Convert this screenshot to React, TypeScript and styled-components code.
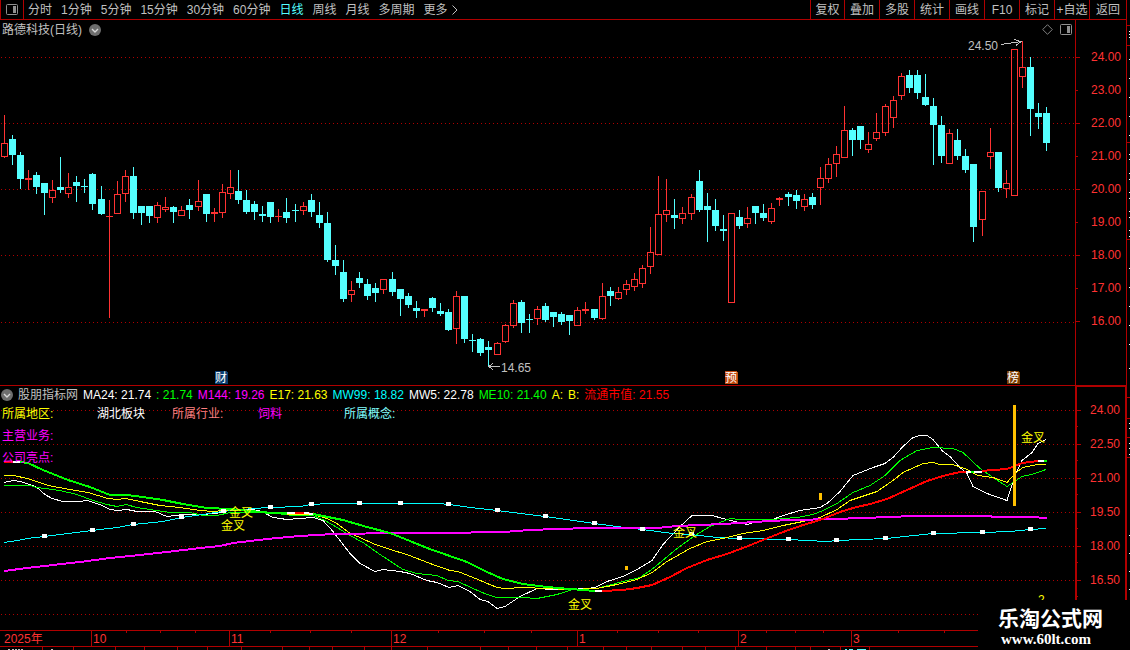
import React from 'react';
import styled, { createGlobalStyle, css } from 'styled-components';

const c = {
  line: '#b00000',
  red: '#ff3232',
  cyan: '#54ffff',
  grey: '#c0c0c0',
};
const fontStack = '"Liberation Sans", "Noto Sans CJK SC", sans-serif';

const Global = createGlobalStyle`
  * { box-sizing: border-box; }
  body {
    margin: 0;
    background: #000;
    color: ${c.grey};
    font: 12px/16px ${fontStack};
    overflow: hidden;
  }
  button { font: inherit; color: inherit; background: none; border: 0; padding: 0; cursor: pointer; }
  button svg { display: block; }
`;

const Page = styled.div`
  position: relative;
  background: #000;
`;
const Upper = styled.div`
  display: grid;
  grid-template-columns: minmax(0, 1fr) 3px;
`;
const Main = styled.main`
  min-width: 0;
`;
const Toolbar = styled.header`
  display: flex;
  height: 20px;
  border-bottom: 1px solid ${c.line};
  border-right: 1px solid ${c.line};
`;
const LayoutButton = styled.button`
  display: flex;
  align-items: center;
  justify-content: center;
  width: 24px;
  border-left: 1px solid ${c.line};
  border-right: 1px solid ${c.line};
`;
const Periods = styled.nav`
  display: flex;
  align-items: center;
  gap: 9px;
  flex: 1;
  padding-left: 4px;
  white-space: nowrap;
`;
const Period = styled.button<{ $active?: boolean }>`
  display: flex;
  align-items: center;
  gap: 4px;
  color: ${(p) => (p.$active ? c.cyan : c.grey)};
`;
const Tools = styled.div`
  display: grid;
  grid-template-columns: 34px repeat(7, 35px) 37px;
`;
const Tool = styled.button`
  border-left: 1px solid ${c.line};
  white-space: nowrap;
`;
const ChartRow = styled.section`
  display: grid;
  grid-template-columns: minmax(0, 1fr) 52px;
`;
const Plot = styled.div<{ $divided?: boolean }>`
  position: relative;
  border-bottom: ${(p) => (p.$divided ? `1px solid ${c.line}` : '0')};
`;
const Canvas = styled.svg<{ $h: number }>`
  display: block;
  width: 100%;
  height: ${(p) => p.$h}px;
  font: 12px ${fontStack};
`;
const Overlay = styled.div`
  position: absolute;
  top: 0;
  left: 0;
  right: 0;
`;
const TitleBar = styled.div`
  display: flex;
  align-items: center;
  justify-content: space-between;
  height: 19px;
  padding: 0 3px 0 2px;
`;
const Group = styled.div`
  display: flex;
  align-items: center;
  gap: 7px;
`;
const Axis = styled.ol<{ $heavy?: boolean }>`
  list-style: none;
  margin: 0;
  padding: ${(p) => (p.$heavy ? '6px 0 0 0' : '21px 0 0 0')};
  color: ${c.red};
  text-align: right;
  border: ${(p) => (p.$heavy ? 2 : 1)}px solid ${c.line};
  border-top: ${(p) => (p.$heavy ? `1px solid ${c.line}` : '0')};
  border-bottom: ${(p) => (p.$heavy ? '0' : `1px solid ${c.line}`)};
`;
const AxisLabel = styled.li<{ $row: number; $minor?: boolean; $half?: boolean }>`
  position: relative;
  height: ${(p) => p.$row}px;
  line-height: ${(p) => p.$row}px;
  padding-right: 5px;
  &::before {
    content: '';
    position: absolute;
    left: 0;
    top: ${(p) => Math.floor(p.$row / 2)}px;
    width: ${(p) => (p.$minor ? 2 : 4)}px;
    height: 1px;
    background: ${c.line};
  }
  ${(p) =>
    p.$half &&
    css`
      &::after {
        content: '';
        position: absolute;
        left: 0;
        bottom: 0;
        width: 1px;
        height: 1px;
        background: ${c.line};
      }
    `}
`;
const Legend = styled.div`
  display: flex;
  align-items: center;
  gap: 5px;
  height: 17px;
  padding-left: 1px;
  white-space: nowrap;
`;
const Tint = styled.span<{ $color: string }>`
  color: ${(p) => p.$color};
`;
const Facts = styled.div`
  display: grid;
  grid-template-columns: 95px 75px 86px 86px auto;
  height: 22px;
  align-items: center;
  padding-left: 2px;
  justify-content: start;
  white-space: nowrap;
`;
const TimeAxis = styled.footer`
  display: grid;
  grid-template-columns: 91fr 138fr 162fr 186fr 161fr 113fr 279fr;
  height: 17px;
  border-top: 1px solid ${c.line};
  border-bottom: 1px solid ${c.line};
  color: ${c.red};
`;
const Month = styled.div<{ $first?: boolean }>`
  position: relative;
  border-left: ${(p) => (p.$first ? '0' : `1px solid ${c.line}`)};
  padding-left: ${(p) => (p.$first ? 4 : 1)}px;
`;
const Ticks = styled.div`
  position: absolute;
  inset: 0 0 auto 0;
  display: flex;
  justify-content: space-evenly;
`;
const Tick = styled.i`
  width: 1px;
  height: 2px;
  background: ${c.line};
`;
const Watermark = styled.a`
  position: absolute;
  right: 0;
  bottom: 0;
  width: 152px;
  height: 50px;
  padding: 2px 0 0 20px;
  background: #000;
  color: #fff;
  text-decoration: none;
`;
const SiteName = styled.span`
  display: block;
  font: bold 21px/30px "Noto Sans CJK SC", sans-serif;
`;
const SiteUrl = styled.span`
  display: block;
  padding-left: 3px;
  font: bold 15px/14px "Liberation Serif", serif;
`;

/* [falling, high, body top, body bottom, low] */
type Bar = [number, number, number, number, number];
const bars: Bar[] = [
  [0,115,143,157,158],[1,135,139,155,165],[1,152,155,179,189],[0,170,178,180,190],[1,172,175,187,194],
  [1,183,183,193,215],[0,180,190,198,203],[1,157,187,190,193],[0,173,187,194,198],[1,176,182,186,202],
  [1,179,186,187,193],[1,173,174,204,210],[1,186,199,214,215],[0,200,216,217,318],[0,181,194,214,214],
  [0,170,176,194,202],[1,167,176,213,219],[1,206,206,213,225],[1,206,206,216,223],[0,202,205,218,223],
  [0,197,207,210,212],[1,206,207,212,223],[0,206,210,216,216],[1,199,205,210,219],[0,180,201,207,211],
  [1,194,194,214,222],[0,208,212,214,222],[0,184,192,213,218],[0,170,187,194,199],[1,170,191,200,204],
  [1,190,200,212,214],[1,201,204,212,220],[1,206,214,216,222],[1,202,202,217,223],[0,209,216,217,222],
  [1,198,212,218,223],[1,204,210,211,222],[0,202,206,211,215],[1,194,200,212,217],[1,202,215,223,228],
  [1,212,223,260,262],[1,245,260,266,275],[1,260,272,299,302],[0,281,290,295,302],[1,272,278,283,288],
  [1,279,284,296,300],[1,283,288,293,302],[0,279,279,290,294],[1,272,279,292,296],[1,289,289,299,316],
  [1,293,296,305,308],[1,301,308,311,318],[0,309,309,311,317],[1,297,298,308,312],[1,303,311,314,316],
  [1,309,312,330,331],[0,291,296,329,344],[1,296,296,339,343],[1,334,340,341,352],[1,338,339,353,356],
  [1,341,347,350,367],[0,342,343,355,355],[0,324,325,342,343],[0,300,303,326,328],[1,300,302,323,333],
  [1,314,319,320,333],[0,306,309,319,325],[1,303,306,320,322],[1,312,312,317,327],[1,312,314,322,325],
  [1,315,315,321,335],[0,307,310,326,326],[0,302,309,311,314],[1,309,309,318,320],[0,283,296,319,320],
  [1,287,291,296,306],[0,287,292,299,300],[0,280,284,290,295],[0,273,279,287,291],[0,265,268,284,288],
  [0,227,252,267,274],[0,176,214,255,255],[0,179,210,215,222],[1,199,215,218,229],[0,207,213,219,224],
  [0,194,197,214,220],[1,170,181,210,212],[1,193,206,210,242],[1,199,210,226,231],[1,215,229,231,241],
  [0,213,213,303,303],[1,210,217,226,229],[0,207,218,224,228],[1,206,206,213,224],[1,204,213,218,221],
  [0,203,208,222,224],[0,197,198,200,206],[1,192,194,197,206],[1,190,195,201,209],[0,194,199,207,211],
  [1,193,197,205,209],[0,167,178,188,205],[0,158,164,179,183],[0,146,154,164,177],[0,106,130,158,158],
  [1,128,130,140,156],[1,126,126,140,149],[0,132,144,150,153],[0,113,132,139,141],[0,104,106,133,136],
  [0,96,100,118,128],[0,73,76,96,100],[1,70,75,88,93],[1,70,75,93,99],[1,74,97,105,106],
  [1,98,106,125,165],[1,116,125,156,163],[0,129,133,164,164],[1,129,140,156,160],[1,149,156,170,173],
  [1,164,164,227,242],[0,191,191,220,236],[0,128,152,157,169],[1,152,152,188,192],[0,170,183,189,198],
  [0,49,49,196,196],[0,41,67,77,88],[1,57,67,109,136],[1,103,113,117,129],[1,107,113,143,151],
];

/* Bars are 8px apart, with one extra pixel after every dozen. */
const barX = (i: number) => 4 + 8 * i + Math.floor((i < 60 ? i : i - 1) / 12);

function Candle({ i, bar }: { i: number; bar: Bar }) {
  const [falling, high, top, bottom, low] = bar;
  const x = barX(i);
  const color = falling ? c.cyan : c.red;
  const solid = falling || bottom - top < 3;
  return (
    <g fill={color}>
      {top > high && <rect x={x} y={high} width="1" height={top - high} />}
      {low > bottom && <rect x={x} y={bottom} width="1" height={low - bottom} />}
      {solid ? (
        <rect x={x - 3} y={top} width="7" height={bottom - top} />
      ) : (
        <path
          fillRule="evenodd"
          d={`M${x - 3} ${top}h7V${bottom}h-7zM${x - 2} ${top + 1}V${bottom - 1}h5V${top + 1}z`}
        />
      )}
    </g>
  );
}

function GridLines({ ys }: { ys: number[] }) {
  return (
    <>
      {ys.map((y) => (
        <line key={y} x1="1" x2="100%" y1={y + 0.5} y2={y + 0.5} stroke={c.line} strokeDasharray="1 3" />
      ))}
    </>
  );
}

function Badge({ x, fill, children }: { x: number; fill: string; children: string }) {
  return (
    <g>
      <path d={`M${x} 371h11l2 2v11h-13z`} fill={fill} />
      <text x={x} y="382" fill="#fff">{children}</text>
    </g>
  );
}

const ChevronDisc = () => (
  <svg width="12" height="12" viewBox="0 0 12 12" aria-hidden="true">
    <circle cx="6" cy="6" r="6" fill="#6e6e6e" />
    <path d="M3 5l3 3 3-3" fill="none" stroke="#d8d8d8" strokeWidth="1.4" />
  </svg>
);

const PanelIcon = () => (
  <svg width="12" height="11" viewBox="0 0 12 11" aria-hidden="true">
    <rect x=".5" y=".5" width="11" height="10" rx="1" fill="none" stroke="#909090" />
    <rect x="7" y="2" width="3" height="7" fill="#909090" />
  </svg>
);

const curves = {
  magenta:
    '4,571 27,568 53,565 80,562 110,558 140,555 167,552 200,548 220,546 233,543 267,539 300,536 333,534 400,533 440,533 503,532 530,530 557,529 590,528 657,528 677,526 700,525 723,524 740,523 770,521 790,520 837,519 860,518 893,517 910,516 990,516 993,517 1038,517 1040,518 1047,518',
  cyan:
    '4,542 18,540 27,538 44,536 92,530 117,527 133,524 163,521 182,517 203,514 222,511 243,509 253,508 270,507 300,506 311,504 330,503 437,503 450,504 470,507 497,510 545,516 594,523 617,526 642,529 673,533 691,534 717,537 739,538 788,539 807,540 827,541 837,540 886,538 933,533 982,532 1010,531 1030,529 1046,528',
  yellow:
    '4,475 14,475 27,478 37,481 48,485 70,489 88,492 108,498 117,499 126,498 140,501 160,505 180,507 200,510 213,511 233,509 253,510 273,513 300,514 313,514 327,518 337,523 350,533 360,537 375,544 400,552 407,554 430,563 450,570 458,571 473,577 497,587 505,588 523,587 570,589 597,588 617,584 637,579 652,572 667,561 690,548 707,541 723,538 743,533 763,530 783,525 803,521 820,517 837,509 850,500 877,491 893,480 903,472 923,463 933,462 940,464 953,464 967,469 978,475 993,477 1007,482 1015,473 1023,467 1037,464 1046,464',
  green:
    '4,485 30,485 37,487 60,490 77,494 93,500 107,504 117,506 126,504 137,507 150,509 170,512 190,512 203,515 217,515 230,512 253,512 277,513 293,515 313,515 325,520 337,527 350,535 363,542 380,554 403,569 417,573 437,575 448,580 458,581 473,588 487,594 497,597 523,597 537,598 557,594 573,589 597,588 623,581 640,577 653,568 677,548 695,535 710,526 730,518 740,519 770,519 797,517 813,514 823,510 837,503 853,492 870,485 885,475 900,460 917,450 933,447 953,448 963,452 980,468 993,477 1007,486 1022,476 1032,474 1046,469',
  white:
    '4,482 13,480 20,481 30,484 37,487 45,494 52,498 63,501 80,501 87,500 100,504 110,509 117,510 127,509 137,511 155,511 167,516 183,514 200,514 217,513 227,509 253,509 262,511 273,517 287,519 313,517 323,520 333,531 350,553 360,563 375,571 383,569 400,571 410,573 427,580 437,582 449,587 458,585 470,591 480,599 488,601 497,608 505,606 520,596 537,588 553,589 570,589 587,588 595,587 607,581 623,576 637,569 652,560 663,544 680,526 692,515 712,515 723,518 747,524 757,521 770,520 783,515 800,510 820,507 827,503 840,491 853,475 873,467 885,463 893,457 903,446 913,437 920,435 927,435 933,439 942,450 950,456 960,467 967,473 973,486 987,493 1007,500 1015,475 1022,460 1032,452 1038,443 1046,439',
};

/* The 24-period average changes colour with its direction. */
const trend: [string, string][] = [
  ['#ff0000', '4,462 13,462'],
  ['#ffffff', '13,462 20,462'],
  ['#00ff00', '20,462 28,463 43,470 68,480 90,487 110,495 127,495 143,497 163,500 183,504 207,508 230,509 250,511 273,513 287,513'],
  ['#ffffff', '287,513 295,513'],
  ['#ff0000', '295,513 304,513'],
  ['#ffffff', '304,513 313,514'],
  ['#00ff00', '313,514 318,515 343,520 367,527 390,533 410,541 427,548 447,555 467,562 487,572 503,579 523,584 547,587 570,589 583,590 595,591'],
  ['#ffffff', '595,591 602,591'],
  ['#ff0000', '602,591 623,590 637,588 652,585 670,577 687,568 707,560 727,554 743,548 763,540 783,532 803,525 820,520 840,512 853,508 870,504 887,499 907,490 927,481 943,476 960,472 966,472'],
  ['#ffffff', '966,472 971,472'],
  ['#00ff00', '971,472 974,472'],
  ['#ffffff', '974,472 982,472'],
  ['#ff0000', '982,471 993,470 1007,469 1015,466 1022,463 1038,461'],
  ['#ffffff', '1038,461 1044,461'],
  ['#00ff00', '1044,461 1047,461'],
];

const markers = [
  [44, 536], [92, 530], [133, 524], [181, 517], [223, 511], [270, 507], [311, 504], [359, 503], [400, 503],
  [448, 504], [497, 510], [545, 516], [594, 523], [642, 529], [691, 534], [739, 538], [788, 539], [836, 540],
  [885, 538], [933, 533], [982, 532], [1030, 529],
];
const crosses = [[229, 517], [221, 530], [568, 609], [673, 537], [1021, 442]];

const periods = ['分时', '1分钟', '5分钟', '15分钟', '30分钟', '60分钟', '日线', '周线', '月线', '多周期'];
const tools = ['复权', '叠加', '多股', '统计', '画线', 'F10', '标记', '+自选', '返回'];
const legend: [string, string][] = [
  ['#ffffff', 'MA24: 21.74'],
  ['#00ff00', ': 21.74'],
  ['#ff00ff', 'M144: 19.26'],
  ['#ffff00', 'E17: 21.63'],
  ['#00ffff', 'MW99: 18.82'],
  ['#ffffff', 'MW5: 22.78'],
  ['#00ff00', 'ME10: 21.40'],
  ['#ffff00', 'A:'],
  ['#ffff00', 'B:'],
  ['#ff0000', '流通市值: 21.55'],
];
const priceLabels = ['24.00', '23.00', '22.00', '21.00', '20.00', '19.00', '18.00', '17.00', '16.00'];
const indicatorLabels = ['24.00', '22.50', '21.00', '19.50', '18.00', '16.50'];
const months: [string, number][] = [['2025年', 0], ['10', 3], ['11', 3], ['12', 3], ['1', 3], ['2', 3], ['3', 5]];
const footTicks = [42, 73, 115, 144, 177, 207, 241, 282, 309, 332, 364, 391, 427, 480, 508, 536, 567, 603, 626, 651, 682, 705, 735, 766, 795, 810, 840, 869];
const edgeRed = [25, 45, 142, 239, 397, 418, 437, 457];
const edgeDots = [31, 34, 37, 59, 78, 97, 116, 135, 154, 159, 173, 179, 192, 198, 211, 217, 230, 236, 268, 287, 306, 325, 344, 368, 423, 428, 443, 448, 454, 535, 553, 571, 589];

function PriceChart() {
  return (
    <ChartRow aria-label="日线">
      <Plot $divided>
        <Canvas $h={365} role="img" aria-label="路德科技 K线">
          <g transform="translate(0 -20)" shapeRendering="crispEdges">
            <GridLines ys={[57, 123, 189, 255, 322]} />
            {bars.map((bar, i) => (
              <Candle key={i} i={i} bar={bar} />
            ))}
            <path d="M1001 44.5L1021 41.5M1014 39.5L1021 41.5L1016 45.5" fill="none" stroke={c.grey} />
            <text x="968" y="50" fill={c.grey}>24.50</text>
            <path d="M489 366.5H500M493 363.5L489 366.5L493 369.5" fill="none" stroke={c.grey} />
            <text x="501" y="372" fill={c.grey}>14.65</text>
            <Badge x={215} fill="#0a3c70">财</Badge>
            <Badge x={725} fill="#c04a10">预</Badge>
            <Badge x={1007} fill="#7c3c00">榜</Badge>
          </g>
        </Canvas>
        <Overlay>
          <TitleBar>
            <Group>
              <span>路德科技(日线)</span>
              <button aria-label="展开"><ChevronDisc /></button>
            </Group>
            <Group>
              <svg width="11" height="11" viewBox="0 0 11 11" aria-hidden="true">
                <path d="M5.5 .7L10.3 5.5 5.5 10.3 .7 5.5z" fill="none" stroke="#808080" />
              </svg>
              <PanelIcon />
            </Group>
          </TitleBar>
        </Overlay>
      </Plot>
      <Axis>
        {priceLabels.map((t, i) => (
          <AxisLabel key={t} $row={33} $minor={i % 2 === 1}>{t}</AxisLabel>
        ))}
      </Axis>
    </ChartRow>
  );
}

function IndicatorChart() {
  return (
    <ChartRow aria-label="股朋指标网">
      <Plot>
        <Canvas $h={244} role="img" aria-label="均线指标">
          <g transform="translate(0 -386)" shapeRendering="crispEdges" fill="none">
            <GridLines ys={[410, 444, 478, 512, 546, 580, 614]} />
            <g transform="translate(0 .5)">
              <polyline points={curves.white} stroke="#fff" />
              <polyline points={curves.green} stroke="#00ff00" />
              <polyline points={curves.cyan} stroke="#00ffff" />
              <polyline points={curves.yellow} stroke="#ffff00" />
            </g>
            <polyline points={curves.magenta} stroke="#ff00ff" strokeWidth="2" />
            {trend.map(([color, points]) => (
              <polyline key={points} points={points} stroke={color} strokeWidth="2" />
            ))}
            {markers.map(([x, y]) => (
              <rect key={x} x={x - 2} y={y - 2} width="5" height="4" fill="#fff" />
            ))}
            <g fill="#ffc000">
              <rect x="1013" y="405" width="3" height="101" />
              <rect x="819" y="493" width="3" height="7" />
              <rect x="625" y="566" width="3" height="4" />
            </g>
            <g fill="#ffff00">
              {crosses.map(([x, y]) => (
                <text key={x} x={x} y={y}>金叉</text>
              ))}
              <text x="1038" y="604">2</text>
            </g>
          </g>
        </Canvas>
        <Overlay>
          <Legend>
            <button aria-label="指标"><ChevronDisc /></button>
            <span>股朋指标网</span>
            {legend.map(([color, text]) => (
              <Tint key={text} $color={color}>{text}</Tint>
            ))}
          </Legend>
          <Facts>
            <Tint $color="#ffff00">所属地区:</Tint>
            <Tint $color="#ffffff">湖北板块</Tint>
            <Tint $color="#ff8080">所属行业:</Tint>
            <Tint $color="#ff00ff">饲料</Tint>
            <Tint $color="#80ffff">所属概念:</Tint>
          </Facts>
          <Facts><Tint $color="#ff00ff">主营业务:</Tint></Facts>
          <Facts><Tint $color="#ff00ff">公司亮点:</Tint></Facts>
        </Overlay>
      </Plot>
      <Axis $heavy>
        {indicatorLabels.map((t) => (
          <AxisLabel key={t} $row={34} $half>{t}</AxisLabel>
        ))}
      </Axis>
    </ChartRow>
  );
}

export default function App() {
  return (
    <Page>
      <Global />
      <Upper>
        <Main>
          <Toolbar>
            <LayoutButton aria-label="布局"><PanelIcon /></LayoutButton>
            <Periods>
              {periods.map((t) => (
                <Period key={t} $active={t === '日线'}>{t}</Period>
              ))}
              <Period>
                更多
                <svg width="6" height="10" viewBox="0 0 6 10" aria-hidden="true">
                  <path d="M.5 .5L5 5 .5 9.5" fill="none" stroke={c.grey} />
                </svg>
              </Period>
            </Periods>
            <Tools>
              {tools.map((t) => (
                <Tool key={t}>{t}</Tool>
              ))}
            </Tools>
          </Toolbar>
          <PriceChart />
          <IndicatorChart />
        </Main>
        <svg width="3" height="630" shapeRendering="crispEdges" aria-hidden="true">
          {edgeRed.map((y) => (
            <rect key={y} y={y} width="3" height="1" fill={c.line} />
          ))}
          {edgeDots.map((y) => (
            <rect key={y} x="2" y={y} width="1" height="1" fill="#fff" />
          ))}
        </svg>
      </Upper>
      <TimeAxis>
        {months.map(([label, n], i) => (
          <Month key={label} $first={i === 0}>
            {label}
            <Ticks>
              {Array.from({ length: n }, (_, k) => (
                <Tick key={k} />
              ))}
            </Ticks>
          </Month>
        ))}
      </TimeAxis>
      <Canvas $h={3} shapeRendering="crispEdges" aria-hidden="true">
        {footTicks.map((x) => (
          <rect key={x} x={x} width="1" height="3" fill={c.line} />
        ))}
        {[8, 12, 15, 18, 21, 51, 828].map((x) => (
          <rect key={x} x={x} y="2" width="2" height="1" fill={c.grey} />
        ))}
        <rect x="845" y="2" width="2" height="1" fill={c.cyan} />
        <rect x="849" y="2" width="4" height="1" fill={c.cyan} />
        <rect x="857" y="2" width="9" height="1" fill={c.cyan} />
      </Canvas>
      <Watermark href="#">
        <SiteName>乐淘公式网</SiteName>
        <SiteUrl>www.60lt.com</SiteUrl>
      </Watermark>
    </Page>
  );
}
